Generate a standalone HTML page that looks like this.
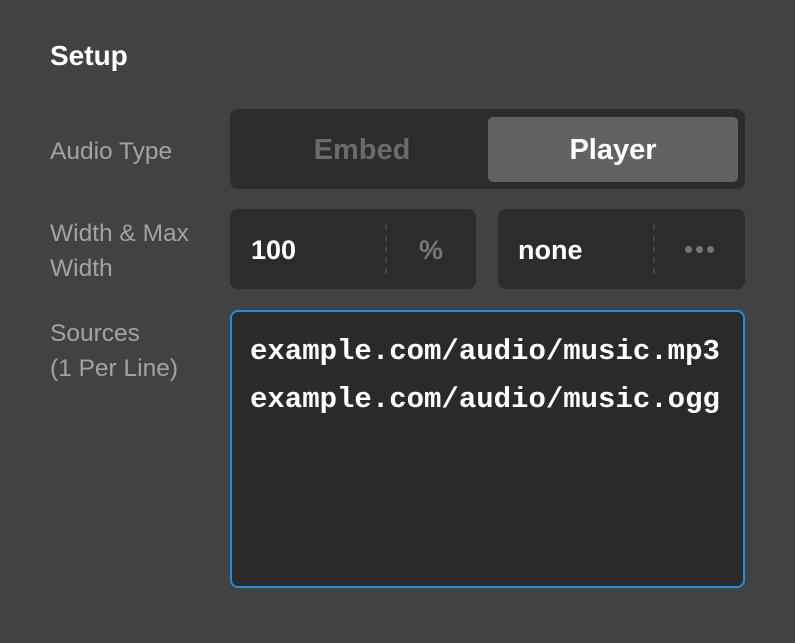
<!DOCTYPE html>
<html><head><style>
body{margin:0;width:795px;height:643px;background:#424242;font-family:"Liberation Sans",sans-serif;position:relative;overflow:hidden}
.a{position:absolute}
.lbl{color:#a3a3a3;font-size:24.5px;line-height:35px;left:50px}
.box{background:#2c2c2c;border-radius:8px}
.dash{position:absolute;top:15px;height:50px;border-left:2px dashed #444;width:0}
.val{position:absolute;color:#fff;font-weight:bold;font-size:27px;line-height:82px;top:0}
.dot{position:absolute;top:37px;width:7px;height:7px;border-radius:50%;background:#777}
</style></head><body>
<div class="a" style="left:50px;top:38px;color:#fff;font-weight:bold;font-size:28px;line-height:36px">Setup</div>
<div class="a lbl" style="top:134px">Audio Type</div>
<div class="a lbl" style="top:216px">Width &amp; Max<br>Width</div>
<div class="a lbl" style="top:316px">Sources<br>(1 Per Line)</div>

<div class="a box" style="left:230px;top:109px;width:515px;height:80px">
  <div class="a" style="left:0;width:264px;top:0;line-height:82px;text-align:center;color:#6b6b6b;font-weight:bold;font-size:29px">Embed</div>
  <div class="a" style="left:258px;top:8px;width:250px;height:65px;background:#626262;border-radius:5px;line-height:67px;text-align:center;color:#fff;font-weight:bold;font-size:29px">Player</div>
</div>

<div class="a box" style="left:230px;top:209px;width:246px;height:80px">
  <div class="val" style="left:21px">100</div>
  <div class="dash" style="left:155px"></div>
  <div class="val" style="left:189px;color:#777">%</div>
</div>
<div class="a box" style="left:498px;top:209px;width:247px;height:80px">
  <div class="val" style="left:20px">none</div>
  <div class="dash" style="left:155px"></div>
  <div class="dot" style="left:187px"></div>
  <div class="dot" style="left:198px"></div>
  <div class="dot" style="left:209px"></div>
</div>

<div class="a" style="left:230px;top:310px;width:511px;height:274px;background:#2a2a2a;border:2px solid #1e8fe0;border-radius:8px">
  <div style="position:absolute;left:18px;top:16px;color:#fff;font-family:'Liberation Mono',monospace;font-weight:bold;font-size:29px;line-height:48px;white-space:nowrap">example.com/audio/music.mp3<br>example.com/audio/music.ogg</div>
</div>
</body></html>
